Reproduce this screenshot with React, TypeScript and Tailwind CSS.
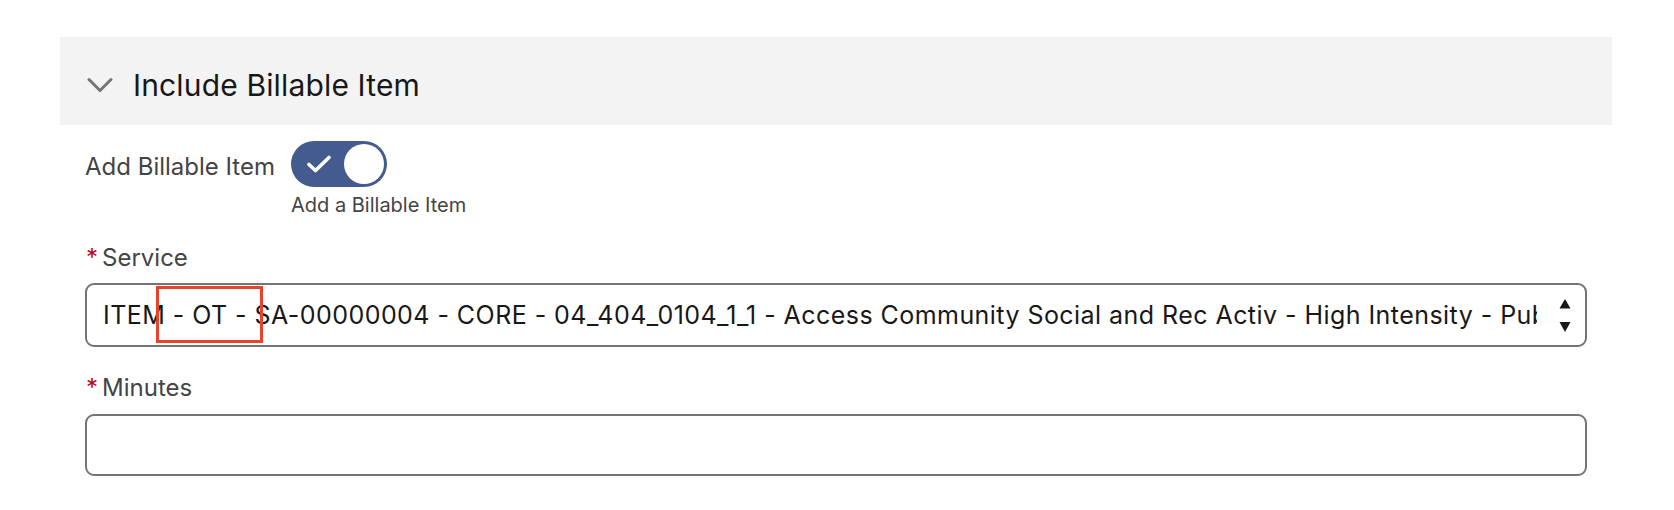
import React from "react";

export default function App() {
  return (
    <div
      className="w-[1674px] h-[510px] bg-white pt-[37px] pl-[60px] pr-[62px]"
      style={{ fontFamily: "Inter, 'Noto Sans', sans-serif" }}
    >
      <div className="h-[88px] bg-[#f3f3f3] flex items-center pl-[27px] pt-[7px]">
        <svg width="26" height="16" viewBox="0 0 26 16" fill="none" className="shrink-0">
          <path d="M2 2.5 L13 13.5 L24 2.5" stroke="#747474" strokeWidth="3" strokeLinecap="round" strokeLinejoin="round" />
        </svg>
        <span className="ml-[20px] text-[30px] leading-[36px] tracking-[0.15px] text-[#181818]">Include Billable Item</span>
      </div>

      <div className="px-[25px]">
        <div className="flex items-start mt-[16px]">
          <span className="mt-[12px] text-[24px] leading-[28px] text-[#444444]">Add Billable Item</span>
          <div className="ml-[16px] flex flex-col">
            <div className="w-[96px] h-[46px] rounded-full bg-[#445b8f] flex items-center justify-between pl-[15px] pr-[3px]">
              <svg width="26" height="18" viewBox="0 0 26 18" fill="none">
                <path d="M3 9.5 L9.5 15.5 L23 2.5" stroke="white" strokeWidth="3.6" strokeLinecap="round" strokeLinejoin="round" />
              </svg>
              <div className="w-[40px] h-[40px] rounded-full bg-white" />
            </div>
            <span className="mt-[7px] text-[20px] leading-[23px] text-[#444444]">Add a Billable Item</span>
          </div>
        </div>

        <div className="mt-[27px] flex items-start text-[24px] leading-[28px] text-[#444444]">
          <span className="text-[#ba0517] mr-[4px] ml-[1px]">*</span>
          <span>Service</span>
        </div>
        <div className="relative mt-[11px] h-[64px] border-2 border-[#747474] rounded-[9px] bg-white flex items-center pl-[16px] pr-[14px]">
          <div className="flex-1 overflow-hidden whitespace-nowrap text-[25px] leading-[28px] tracking-[0.45px] text-[#181818] mr-[22px]">
            ITEM - OT - SA-00000004 - CORE - 04_404_0104_1_1 - Access Community Social and Rec Activ - High Intensity - Public Holiday
          </div>
          <svg width="12" height="33" viewBox="0 0 12 33" className="shrink-0">
            <path d="M6 0 L11.5 9.5 L0.5 9.5 Z" fill="#181818" />
            <path d="M6 33 L11.5 23 L0.5 23 Z" fill="#181818" />
          </svg>
          <div className="absolute left-[69px] top-[1px] w-[107px] h-[57px] border-[3px] border-[#e8432b] pointer-events-none" />
        </div>

        <div className="mt-[27px] flex items-start text-[24px] leading-[28px] text-[#444444]">
          <span className="text-[#ba0517] mr-[4px] ml-[1px]">*</span>
          <span>Minutes</span>
        </div>
        <div className="mt-[12px] h-[62px] border-2 border-[#747474] rounded-[9px] bg-white" />
      </div>
    </div>
  );
}
